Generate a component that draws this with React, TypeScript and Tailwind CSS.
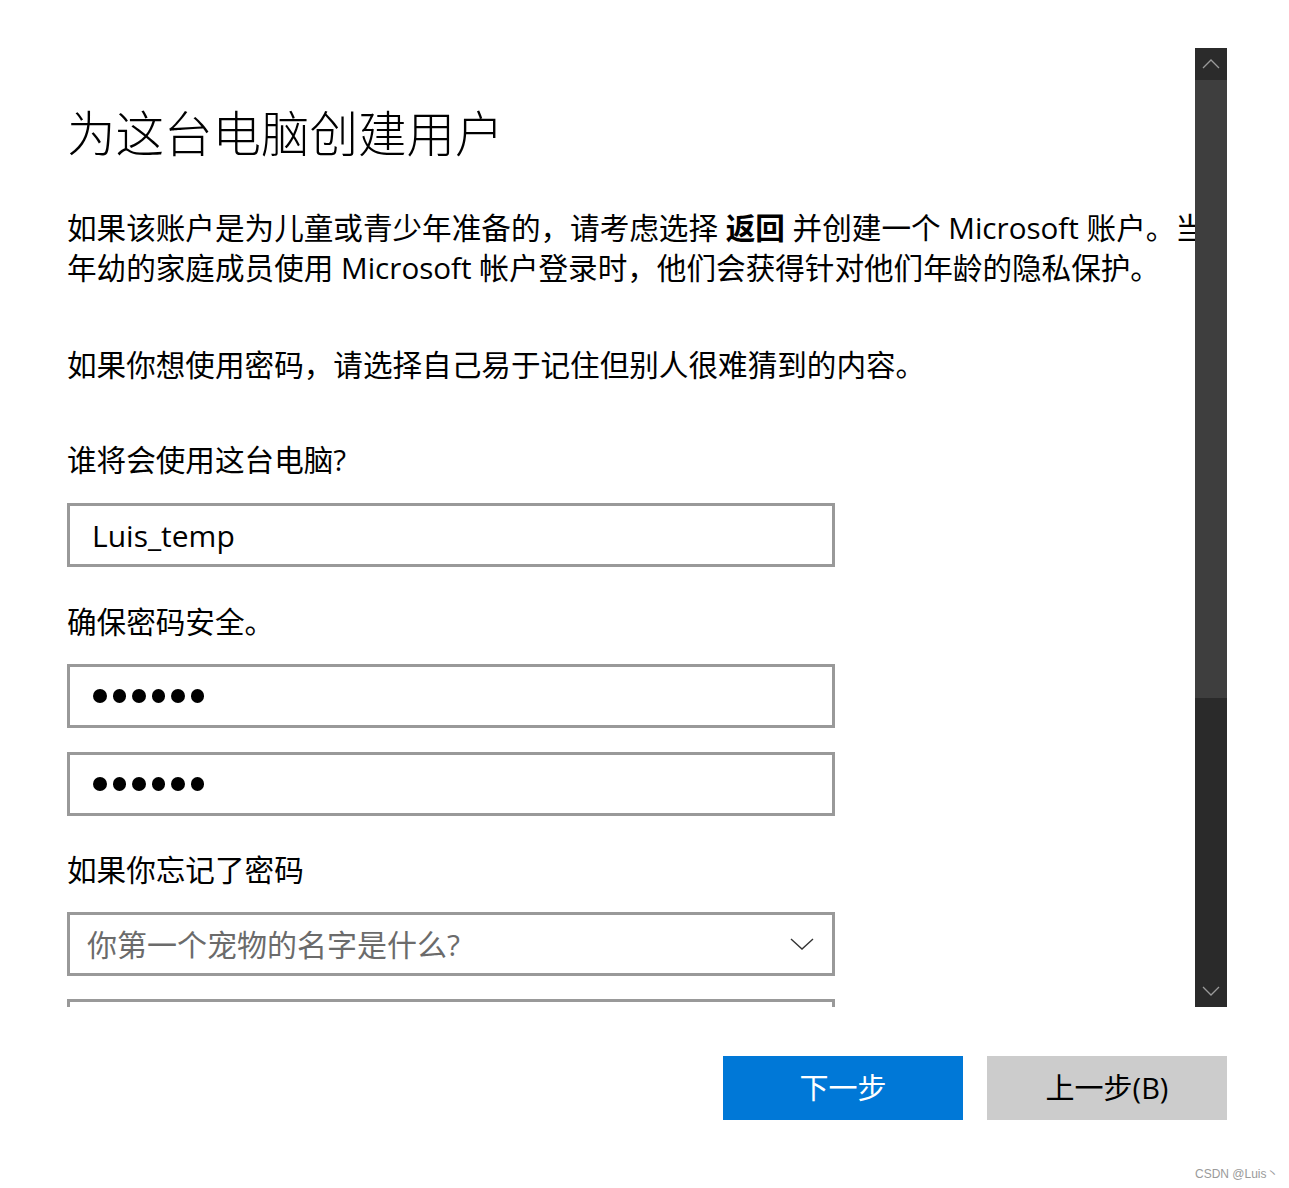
import React from "react";

function Dots() {
  return (
    <div className="flex items-center gap-[6px]">
      {[0, 1, 2, 3, 4, 5].map((i) => (
        <div key={i} className="w-[13.5px] h-[13.5px] rounded-full bg-black" />
      ))}
    </div>
  );
}

export default function App() {
  return (
    <div className="relative w-[1289px] h-[1188px] bg-white text-black font-['Open_Sans','Noto_Sans_CJK_SC',sans-serif]">
      <div className="h-[48px]" />
      <div className="flex h-[959px] w-[1227px]">
        <div className="flex-1 overflow-hidden pl-[67px]">
          <div className="h-[53px]" />
          <h1 className="text-[48.5px] leading-[64px] font-light whitespace-nowrap">为这台电脑创建用户</h1>
          <div className="mt-[43px] text-[29.6px] leading-[40px] whitespace-nowrap">
            <div>
              如果该账户是为儿童或青少年准备的，请考虑选择 <span className="font-bold">返回</span> 并创建一个 Microsoft 账户。当
            </div>
            <div>年幼的家庭成员使用 Microsoft 帐户登录时，他们会获得针对他们年龄的隐私保护。</div>
          </div>
          <p className="mt-[57px] text-[29.6px] leading-[40px] whitespace-nowrap">
            如果你想使用密码，请选择自己易于记住但别人很难猜到的内容。
          </p>
          <p className="mt-[55px] text-[29.6px] leading-[40px] whitespace-nowrap">谁将会使用这台电脑?</p>
          <div className="mt-[23px] w-[768px] h-[64px] border-[3px] border-[#999999] flex items-center pl-[22px] text-[30px]">
            Luis_temp
          </div>
          <p className="mt-[35px] text-[29.6px] leading-[40px] whitespace-nowrap">确保密码安全。</p>
          <div className="mt-[22px] w-[768px] h-[64px] border-[3px] border-[#999999] flex items-center pl-[23px]">
            <Dots />
          </div>
          <div className="mt-[24px] w-[768px] h-[64px] border-[3px] border-[#999999] flex items-center pl-[23px]">
            <Dots />
          </div>
          <p className="mt-[34px] text-[29.6px] leading-[40px] whitespace-nowrap">如果你忘记了密码</p>
          <div className="mt-[22px] w-[768px] h-[64px] border-[3px] border-[#999999] flex items-center justify-between pl-[17px] pr-[18px] text-[30px] text-[#6b6b6b]">
            <span>你第一个宠物的名字是什么?</span>
            <svg width="24" height="14" viewBox="0 0 24 14" fill="none">
              <path d="M1 2 L12 12 L23 2" stroke="#333" strokeWidth="1.4" />
            </svg>
          </div>
          <div className="mt-[23px] w-[768px] h-[64px] border-[3px] border-[#999999]" />
        </div>
        <div className="w-[32px] flex flex-col bg-[#2a2a2a]">
          <div className="h-[32px] flex items-center justify-center bg-[#2b2b2b]">
            <svg width="18" height="10" viewBox="0 0 18 10" fill="none">
              <path d="M1 9 L9 1 L17 9" stroke="#9a9a9a" strokeWidth="1.3" />
            </svg>
          </div>
          <div className="h-[618px] bg-[#3e3e3e]" />
          <div className="flex-1" />
          <div className="h-[32px] flex items-center justify-center">
            <svg width="18" height="10" viewBox="0 0 18 10" fill="none">
              <path d="M1 1 L9 9 L17 1" stroke="#9a9a9a" strokeWidth="1.3" />
            </svg>
          </div>
        </div>
      </div>
      <div className="mt-[49px] flex justify-end gap-[24px] w-[1227px]">
        <button className="w-[240px] h-[64px] bg-[#0078d7] text-white text-[29px]">下一步</button>
        <button className="w-[240px] h-[64px] bg-[#cccccc] text-black text-[29px]">上一步(B)</button>
      </div>
      <div className="absolute left-[1195px] top-[1165px] text-[12px] text-[#9a9a9a] font-['Liberation_Sans','Noto_Sans_CJK_SC',sans-serif]">
        CSDN @Luis丶
      </div>
    </div>
  );
}
